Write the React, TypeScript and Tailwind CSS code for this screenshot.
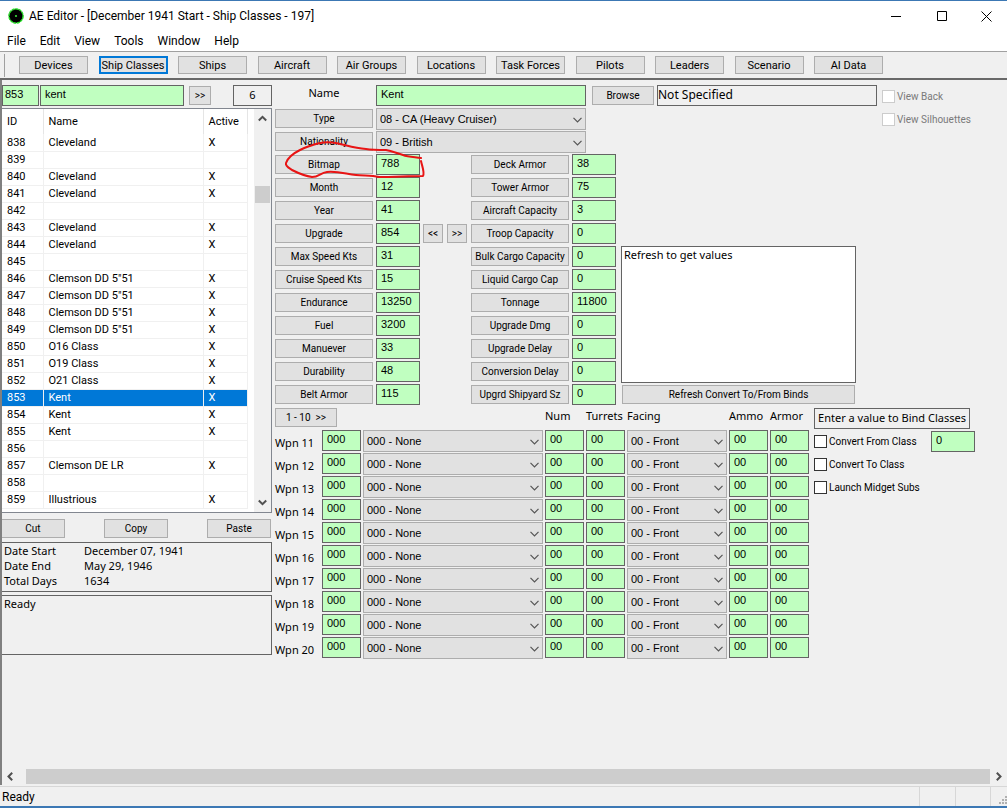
import React from "react";
import clsx from "clsx";

const toolbar = [
  "Devices",
  "Ship Classes",
  "Ships",
  "Aircraft",
  "Air Groups",
  "Locations",
  "Task Forces",
  "Pilots",
  "Leaders",
  "Scenario",
  "AI Data",
];

const shipClasses = [
  { id: 838, name: "Cleveland" },
  { id: 839, name: "" },
  { id: 840, name: "Cleveland" },
  { id: 841, name: "Cleveland" },
  { id: 842, name: "" },
  { id: 843, name: "Cleveland" },
  { id: 844, name: "Cleveland" },
  { id: 845, name: "" },
  { id: 846, name: 'Clemson DD 5"51' },
  { id: 847, name: 'Clemson DD 5"51' },
  { id: 848, name: 'Clemson DD 5"51' },
  { id: 849, name: 'Clemson DD 5"51' },
  { id: 850, name: "O16 Class" },
  { id: 851, name: "O19 Class" },
  { id: 852, name: "O21 Class" },
  { id: 853, name: "Kent" },
  { id: 854, name: "Kent" },
  { id: 855, name: "Kent" },
  { id: 856, name: "" },
  { id: 857, name: "Clemson DE LR" },
  { id: 858, name: "" },
  { id: 859, name: "Illustrious" },
];

const leftFields = [
  ["Bitmap", "788"],
  ["Month", "12"],
  ["Year", "41"],
  ["Upgrade", "854"],
  ["Max Speed Kts", "31"],
  ["Cruise Speed Kts", "15"],
  ["Endurance", "13250"],
  ["Fuel", "3200"],
  ["Manuever", "33"],
  ["Durability", "48"],
  ["Belt Armor", "115"],
];

const rightFields = [
  ["Deck Armor", "38"],
  ["Tower Armor", "75"],
  ["Aircraft Capacity", "3"],
  ["Troop Capacity", "0"],
  ["Bulk Cargo Capacity", "0"],
  ["Liquid Cargo Cap", "0"],
  ["Tonnage", "11800"],
  ["Upgrade Dmg", "0"],
  ["Upgrade Delay", "0"],
  ["Conversion Delay", "0"],
  ["Upgrd Shipyard Sz", "0"],
];

const weapons = [11, 12, 13, 14, 15, 16, 17, 18, 19, 20];

const Button: React.FC<{ className?: string; children: React.ReactNode }> = ({
  className,
  children,
}) => (
  <button
    type="button"
    className={clsx(
      "flex h-[19px] shrink-0 items-center justify-center whitespace-pre border border-[#adadad] bg-[#e1e1e1] font-['Roboto',sans-serif] text-[10px] leading-none hover:bg-[#e5f1fb]",
      className
    )}
  >
    {children}
  </button>
);

const Field: React.FC<{ label: string; value: string; className?: string }> = ({
  label,
  value,
  className,
}) => (
  <input
    type="text"
    aria-label={label}
    defaultValue={value}
    className={clsx(
      "h-[21px] shrink-0 border border-[#646464] bg-[#c0ffc0] pb-[3px] pl-1 font-['Liberation_Sans',sans-serif] text-[11px] outline-none",
      className
    )}
  />
);

const Combo: React.FC<{ label: string; value: string; className?: string }> = ({
  label,
  value,
  className,
}) => (
  <div className={clsx("relative h-[22px] shrink-0", className)}>
    <select
      aria-label={label}
      className="block h-full w-full appearance-none border border-[#adadad] bg-[#e1e1e1] pl-[3px] font-['Liberation_Sans',sans-serif] text-[11px] outline-none"
    >
      <option>{value}</option>
    </select>
    <svg
      className="pointer-events-none absolute right-1 top-[9px] h-[6px] w-[9px]"
      viewBox="0 0 9 6"
      fill="none"
      stroke="#555"
      strokeWidth="1.2"
    >
      <path d="M0.5 0.8L4.5 4.8L8.5 0.8" />
    </svg>
  </div>
);

const Check: React.FC<{ label: string; disabled?: boolean }> = ({
  label,
  disabled,
}) => (
  <label
    className={clsx(
      "flex h-[23px] shrink-0 items-center gap-[2px] whitespace-nowrap font-['Roboto',sans-serif] text-[10px]",
      disabled && "text-[#7a7a7a]"
    )}
  >
    <input
      type="checkbox"
      disabled={disabled}
      className="h-[13px] w-[13px] appearance-none border border-[#333] bg-white checked:bg-[#0078d7] disabled:border-[#ccc]"
    />
    {label}
  </label>
);

const Arrow: React.FC<{ d: string; className?: string }> = ({
  d,
  className,
}) => (
  <svg
    className={clsx("h-[9px] w-[9px]", className)}
    viewBox="0 0 9 9"
    fill="none"
    stroke="#505050"
    strokeWidth={2}
  >
    <path d={d} />
  </svg>
);

const TitleBar = () => (
  <header className="bg-white font-['Roboto',sans-serif] text-[12px]">
    <div className="flex h-[30px] items-center pl-2">
      <svg className="h-4 w-4" viewBox="0 0 16 16">
        <circle cx="8" cy="8" r="7.1" fill="#000" stroke="#22e022" strokeWidth="1.4" strokeDasharray="3 0.6" />
        <circle cx="8" cy="8" r="1.1" fill="#3be03b" />
      </svg>
      <h1 className="ml-[5px]">
        AE Editor - [December 1941 Start - Ship Classes - 197]
      </h1>
      <div className="ml-auto flex">
        <button type="button" aria-label="Minimize" className="flex w-[46px] justify-center">
          <svg className="h-[11px] w-[11px]" viewBox="0 0 11 11" stroke="#000">
            <path d="M0 5.5H10" />
          </svg>
        </button>
        <button type="button" aria-label="Maximize" className="flex w-[46px] justify-center">
          <svg className="h-[11px] w-[11px]" viewBox="0 0 11 11" fill="none" stroke="#000">
            <path d="M0.5 0.5H9.5V9.5H0.5Z" />
          </svg>
        </button>
        <button type="button" aria-label="Close" className="flex w-[42px] justify-center">
          <svg className="h-[11px] w-[11px]" viewBox="0 0 11 11" fill="none" stroke="#000">
            <path d="M0.5 0.5L10.5 10.5M10.5 0.5L0.5 10.5" />
          </svg>
        </button>
      </div>
    </div>
    <nav className="flex h-5 items-center gap-[14px] pl-[7px]">
      {["File", "Edit", "View", "Tools", "Window", "Help"].map((item) => (
        <button key={item} type="button">
          {item}
        </button>
      ))}
    </nav>
  </header>
);

const Toolbar = () => (
  <div className="flex h-[29px] items-center border-b-2 border-t border-b-[#696969] border-t-[#a0a0a0] pl-1">
    <div className="mr-[14px] h-[23px] w-px bg-[#a0a0a0]" />
    <div className="flex w-[864px] justify-between">
      {toolbar.map((item) => (
        <button
          key={item}
          type="button"
          className={clsx(
            "flex h-[18px] w-[69px] items-center justify-center whitespace-nowrap bg-[#e1e1e1] font-['Roboto',sans-serif] text-[11px] leading-none",
            item === "Ship Classes"
              ? "border-2 border-[#0078d7]"
              : "border border-[#adadad]"
          )}
        >
          {item}
        </button>
      ))}
    </div>
  </div>
);

const ClassList = () => (
  <div className="mt-[2px] flex h-[405px] border-b border-r border-t border-[#828790] bg-white">
    <table className="h-fit w-[246px] table-fixed border-collapse text-left font-['Roboto',sans-serif] text-[11px] leading-none">
      <thead>
        <tr className="h-[25px]">
          <th className="w-[41px] border-r border-[#e5e5e5] pl-[5px] font-normal">ID</th>
          <th className="w-[160px] border-r border-[#e5e5e5] pl-[5px] font-normal">Name</th>
          <th className="border-r border-[#e5e5e5] pl-[5px] font-normal">Active</th>
        </tr>
      </thead>
      <tbody>
        {shipClasses.map((ship) => (
          <tr
            key={ship.id}
            className={clsx(
              "h-[17px] border-b border-[#f0f0f0]",
              ship.id === 853 && "bg-[#0078d7] text-white"
            )}
          >
            <td className="border-r border-[#f0f0f0] p-0 pl-[5px]">{ship.id}</td>
            <td className="border-r border-[#f0f0f0] p-0 pl-[5px]">{ship.name}</td>
            <td className="border-r border-[#f0f0f0] p-0 pl-[5px]">{ship.name && "X"}</td>
          </tr>
        ))}
      </tbody>
    </table>
    <div className="ml-auto flex w-[17px] flex-col items-center bg-[#f0f0f0] py-[5px]">
      <Arrow d="M0.8 6.5L4.5 2.8L8.2 6.5" />
      <div className="mt-[63px] h-[17px] w-[15px] bg-[#cdcdcd]" />
      <Arrow d="M0.8 2.5L4.5 6.2L8.2 2.5" className="mt-auto" />
    </div>
  </div>
);

const Sidebar = () => (
  <aside className="w-[270px] shrink-0">
    <div className="flex items-start">
      <Field label="Class ID" value="853" className="w-[37px] !pl-[2px]" />
      <Field label="Search name" value="kent" className="ml-px w-[144px]" />
      <Button className="ml-[5px] mt-px w-[22px]">{">>"}</Button>
      <div className="ml-auto flex h-[21px] w-[39px] items-center justify-center border border-[#646464] text-[11px]">
        6
      </div>
    </div>
    <ClassList />
    <div className="mt-[6px] flex justify-between pr-px">
      <Button className="w-[63px] border-l-0">Cut</Button>
      <Button className="w-[64px]">Copy</Button>
      <Button className="w-[64px]">Paste</Button>
    </div>
    <dl className="mt-1 grid h-[50px] grid-cols-[80px_1fr] content-start border border-l-0 border-[#646464] pl-[2px] text-[11px] leading-[15px]">
      <dt>Date Start</dt>
      <dd>December 07, 1941</dd>
      <dt>Date End</dt>
      <dd>May 29, 1946</dd>
      <dt>Total Days</dt>
      <dd>1634</dd>
    </dl>
    <div className="mt-[3px] h-[60px] border border-l-0 border-[#646464] pl-[2px] text-[11px] leading-4">
      Ready
    </div>
  </aside>
);

const ShipForm = () => (
  <section className="min-w-0 flex-1">
    <div className="flex h-[23px] items-start">
      <div className="w-[101px] pr-[3px] text-center text-[11px] leading-4">Name</div>
      <Field label="Name" value="Kent" className="w-[210px]" />
      <Button className="ml-[6px] mt-px w-[62px]">Browse</Button>
      <input
        type="text"
        aria-label="Bitmap file"
        readOnly
        defaultValue="Not Specified"
        className="ml-[3px] mr-[5px] h-[21px] w-[220px] shrink-0 border border-[#646464] bg-transparent pb-[3px] text-[12px] outline-none"
      />
      <Check label="View Back" disabled />
    </div>
    <div className="flex h-[23px] items-start">
      <Button className="mr-[3px] mt-px w-[98px]">Type</Button>
      <Combo label="Type" value="08 - CA (Heavy Cruiser)" className="mr-[296px] w-[210px]" />
      <Check label="View Silhouettes" disabled />
    </div>
    <div className="flex h-[23px] items-start">
      <Button className="mr-[3px] mt-px w-[98px]">Nationality</Button>
      <Combo label="Nationality" value="09 - British" className="w-[210px]" />
    </div>

    <div className="relative flex">
      <div>
        {leftFields.map(([label, value]) => (
          <div key={label} className="flex h-[23px] w-[196px] items-start">
            <Button className="mr-[3px] mt-px w-[98px]">{label}</Button>
            <Field label={label} value={value} className="w-[44px]" />
            {label === "Upgrade" && (
              <>
                <Button className="ml-[3px] mt-px w-5">{"<<"}</Button>
                <Button className="ml-1 mt-px w-5">{">>"}</Button>
              </>
            )}
          </div>
        ))}
      </div>
      <div>
        {rightFields.map(([label, value]) => (
          <div key={label} className="flex h-[23px] items-start">
            <Button className="mr-[3px] mt-px w-[98px]">{label}</Button>
            <Field label={label} value={value} className="w-[44px]" />
          </div>
        ))}
      </div>
      <div className="ml-[5px] flex w-[235px] flex-col justify-end pb-[3px]">
        <div className="h-[137px] border border-[#646464] bg-white pl-[2px] text-[11px] leading-4">
          Refresh to get values
        </div>
        <Button className="mx-px mt-[2px]">Refresh Convert To/From Binds</Button>
      </div>
      {/* hand-drawn mark round the bitmap number */}
      <svg
        className="pointer-events-none absolute -top-4 left-0 h-[44px] w-[160px]"
        viewBox="275 138 160 44"
        fill="none"
        stroke="#e81414"
        strokeWidth="2"
        strokeLinejoin="round"
        strokeLinecap="round"
      >
        <path d="M421 158C414 157 408 157 403 155C396 153 392 151 386 150C378 150 372 150 366 149C354 148 346 145 336 143C330 142 325 142 320 143C312 145 306 147 300 150C294 153 288 157 286 163C285 166 289 168 292 170C298 173 304 176 312 177C319 177 320 173 327 172C338 171 346 174 356 175C364 176 371 175 379 177C394 177 409 176 423 176C425 173 422 166 421 161" />
      </svg>
    </div>

    <div className="flex items-start gap-[5px]">
      <div>
        <div className="grid h-[23px] grid-cols-[268px_39px_39px_100px_39px_39px] items-start gap-x-[2px] whitespace-nowrap text-[11px] leading-[18px]">
          <Button className="mt-px w-[62px]">{"1 - 10  >>"}</Button>
          <span>Num</span>
          <span>Turrets</span>
          <span>Facing</span>
          <span>Ammo</span>
          <span>Armor</span>
        </div>
        {weapons.map((n) => (
          <div
            key={n}
            className="grid h-[23px] grid-cols-[45px_39px_180px_39px_39px_100px_39px_39px] items-start gap-x-[2px]"
          >
            <span className="whitespace-nowrap text-[11px] leading-[25px]">Wpn {n}</span>
            <Field label={`Weapon ${n} ID`} value="000" />
            <Combo label={`Weapon ${n}`} value="000 - None" />
            <Field label={`Weapon ${n} number`} value="00" />
            <Field label={`Weapon ${n} turrets`} value="00" />
            <Combo label={`Weapon ${n} facing`} value="00 - Front" />
            <Field label={`Weapon ${n} ammo`} value="00" />
            <Field label={`Weapon ${n} armor`} value="00" />
          </div>
        ))}
      </div>
      <div className="w-[161px] pt-px">
        <div className="flex h-[21px] w-[156px] items-center justify-center whitespace-nowrap border border-[#646464] text-[11px]">
          Enter a value to Bind Classes
        </div>
        <div className="mt-px flex items-center justify-between">
          <Check label="Convert From Class" />
          <Field label="Convert from class" value="0" className="w-[44px]" />
        </div>
        <Check label="Convert To Class" />
        <Check label="Launch Midget Subs" />
      </div>
    </div>
  </section>
);

const App: React.FC = () => {
  return (
    <div className="flex min-h-screen flex-col overflow-hidden border-b-2 border-t border-[#3c78b4] bg-[#f0f0f0] font-['Comic_Sans_MS','Noto_Sans',sans-serif] text-black">
      <TitleBar />
      <Toolbar />
      <main className="flex flex-1 flex-col border-l-2 border-[#808080]">
        <div className="flex flex-1 items-start gap-[3px] pt-[5px]">
          <Sidebar />
          <ShipForm />
        </div>
        <div className="flex h-[17px] items-center">
          <Arrow d="M6.2 0.8L2.5 4.5L6.2 8.2" className="ml-1 mr-[11px]" />
          <div className="h-[15px] flex-1 bg-[#cdcdcd]" />
          <Arrow d="M2.8 0.8L6.5 4.5L2.8 8.2" className="mx-1" />
        </div>
      </main>
      <footer className="mt-px flex h-5 items-stretch border-t border-[#d7d7d7] font-['Roboto',sans-serif] text-[12px] leading-5">
        <span className="flex-1 pl-[2px]">Ready</span>
        <span className="w-9 border-l border-[#d7d7d7]" />
        <span className="w-[35px] border-l border-[#d7d7d7]" />
        <span className="flex w-[17px] items-end justify-end border-l border-[#d7d7d7] pb-[2px]">
          <svg className="h-2 w-2" viewBox="0 0 8 8" fill="#b0b0b0">
            <path d="M6 0h2v2H6zM3 3h2v2H3zM6 3h2v2H6zM0 6h2v2H0zM3 6h2v2H3zM6 6h2v2H6z" />
          </svg>
        </span>
      </footer>
    </div>
  );
};

export default App;
